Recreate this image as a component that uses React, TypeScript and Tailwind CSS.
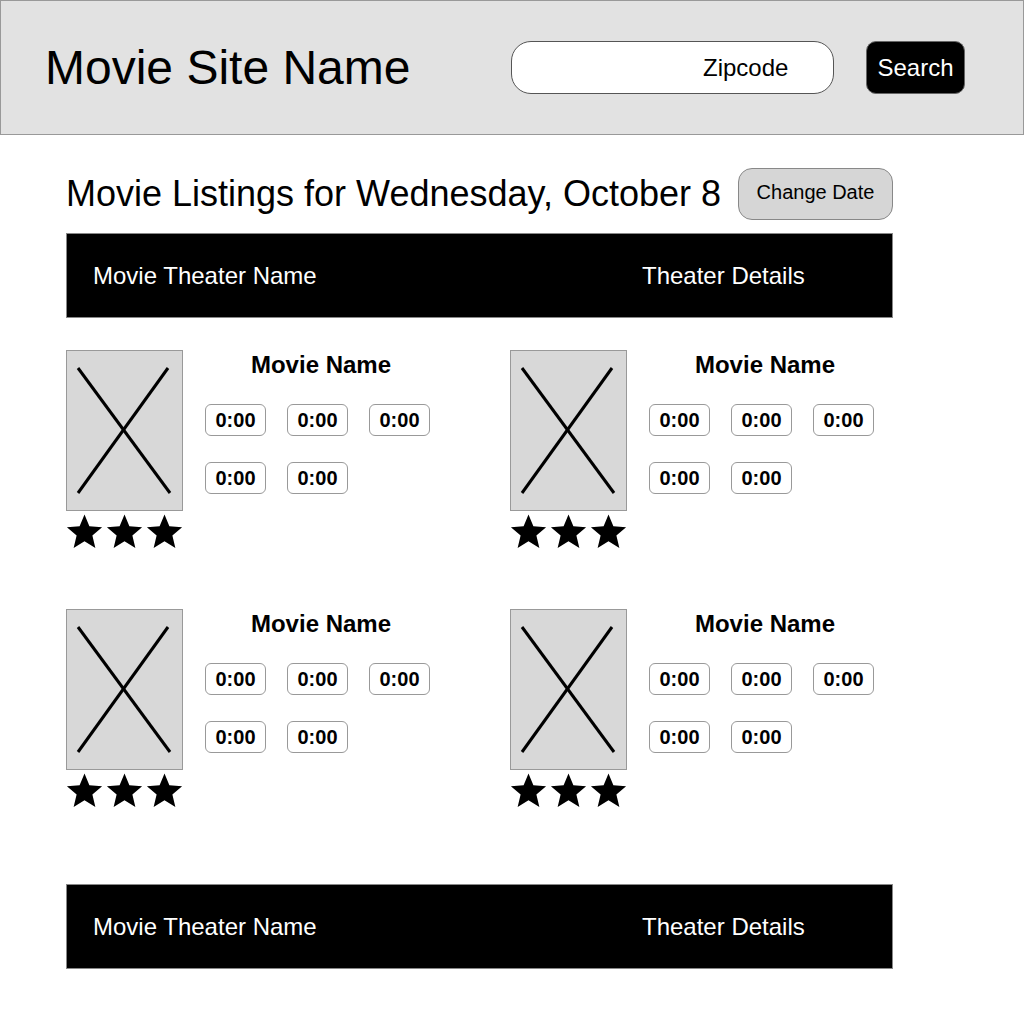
import React from 'react'

const movies = [1, 2, 3, 4]
const times = ['0:00', '0:00', '0:00', '0:00', '0:00']

function Star() {
  return (
    <svg width="38" height="38" viewBox="0 0 37 37">
      <polygon
        points="18.5,0.5 23.38,12.29 36.09,13.28 26.39,21.56 29.37,33.97 18.5,27.3 7.63,33.97 10.61,21.56 0.91,13.28 13.62,12.29"
        fill="#000"
        transform="translate(0 1.5)"
      />
    </svg>
  )
}

function Poster() {
  return (
    <div className="w-[117px] h-[161px] bg-[#d8d8d8] border border-[#999]">
      <svg width="115" height="159" viewBox="0 0 115 159">
        <line x1="11" y1="17" x2="103" y2="142" stroke="#000" strokeWidth="3" />
        <line x1="101" y1="17" x2="11" y2="142" stroke="#000" strokeWidth="3" />
      </svg>
    </div>
  )
}

function MovieCard() {
  return (
    <div className="flex h-[200px]">
      <div className="flex flex-col w-[117px]">
        <Poster />
        <div className="flex gap-[3px] mt-px">
          <Star />
          <Star />
          <Star />
        </div>
      </div>
      <div className="ml-[22px] w-[232px]">
        <div className="h-[30px] leading-[30px] text-center text-[24px] font-bold">Movie Name</div>
        <div className="mt-[24px] flex flex-wrap gap-x-[21px] gap-y-[26px] w-[232px]">
          {times.map((t, i) => (
            <div
              key={i}
              className="w-[61px] h-[32px] rounded-[6px] border border-[#999] flex items-center justify-center text-[20px] font-bold"
            >
              {t}
            </div>
          ))}
        </div>
      </div>
    </div>
  )
}

function TheaterBar() {
  return (
    <div className="w-[827px] h-[85px] bg-black border border-[#888] flex items-center pl-[26px] text-white text-[24px]">
      <span className="w-[549px]">Movie Theater Name</span>
      <span>Theater Details</span>
    </div>
  )
}

export default function App() {
  return (
    <div className="font-['Liberation_Sans',Arial,sans-serif] text-black bg-white min-h-[1024px]">
      {/* cabeçalho */}
      <header className="h-[135px] bg-[#e2e2e2] border border-[#999] flex items-center pl-[44px]">
        <h1 className="w-[466px] text-[48px] leading-none">Movie Site Name</h1>
        <div className="w-[323px] h-[53px] rounded-[20px] border border-[#555] bg-white flex items-center pl-[191px] text-[24px]">
          Zipcode
        </div>
        <button className="ml-[32px] w-[99px] h-[53px] rounded-[10px] bg-black border border-[#666] text-white text-[24px]">
          Search
        </button>
      </header>

      <main className="pl-[66px]">
        <div className="mt-[33px] flex items-center h-[52px]">
          <h2 className="w-[672px] text-[36px] leading-none">Movie Listings for Wednesday, October 8</h2>
          <button className="w-[155px] h-[52px] rounded-[14px] bg-[#d6d6d6] border border-[#888] text-[20px] pb-[4px]">
            Change Date
          </button>
        </div>

        <div className="mt-[13px]">
          <TheaterBar />
        </div>

        <div className="mt-[32px] grid grid-cols-[444px_444px] gap-y-[59px]">
          {movies.map((m) => (
            <MovieCard key={m} />
          ))}
        </div>

        <div className="mt-[75px]">
          <TheaterBar />
        </div>
      </main>
    </div>
  )
}
